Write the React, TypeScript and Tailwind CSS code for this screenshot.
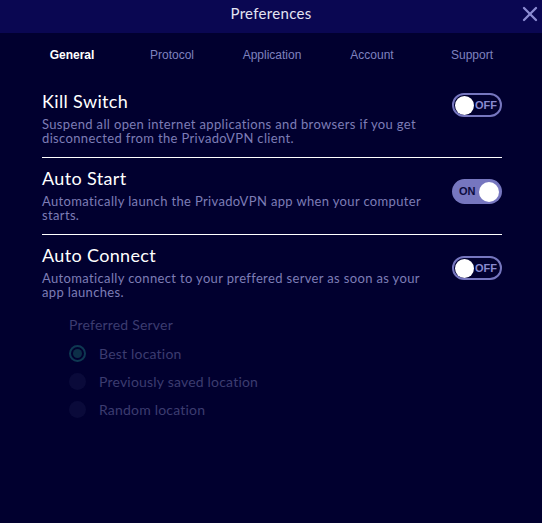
import { X } from "lucide-react";

const tabs = ["General", "Protocol", "Application", "Account", "Support"];

const Toggle = ({ on }: { on: boolean }) =>
  on ? (
    <div className="w-[50px] h-[25px] rounded-full bg-[#7676bf] flex items-center justify-between pl-[7px] pr-[3px]">
      <span className="text-[11px] font-bold text-[#0b0b3e] font-['Liberation_Sans',sans-serif]">ON</span>
      <span className="w-[20px] h-[20px] rounded-full bg-white" />
    </div>
  ) : (
    <div className="w-[50px] h-[24px] rounded-full border-2 border-[#7676bf] flex items-center justify-between pl-[1px] pr-[3px]">
      <span className="w-[19px] h-[19px] rounded-full bg-white" />
      <span className="text-[11px] font-bold text-[#8a8ad0] font-['Liberation_Sans',sans-serif]">OFF</span>
    </div>
  );

const Setting = ({
  title,
  desc,
  on,
  pt,
  toggleTop,
  divider,
}: {
  title: string;
  desc: string;
  on: boolean;
  pt: string;
  toggleTop: string;
  divider: boolean;
}) => (
  <div className={`${pt} pb-[12px] ${divider ? "border-b border-white" : ""} flex justify-between items-start`}>
    <div className="w-[392px]">
      <h2 className="text-[18px] leading-[22px] text-white tracking-[0.35px]">{title}</h2>
      <p className="mt-[5px] text-[13px] leading-[14px] text-[#7d7db6] tracking-[0.35px]">{desc}</p>
    </div>
    <div className={toggleTop}>
      <Toggle on={on} />
    </div>
  </div>
);

const Radio = ({ checked, label }: { checked: boolean; label: string }) => (
  <div className="flex items-center h-[28px]">
    {checked ? (
      <span className="w-[17px] h-[17px] rounded-full border-2 border-[#0e3852] flex items-center justify-center">
        <span className="w-[9px] h-[9px] rounded-full bg-[#0c2f48]" />
      </span>
    ) : (
      <span className="w-[17px] h-[17px] rounded-full bg-[#0a0a3a]" />
    )}
    <span className="ml-[13px] text-[14px] text-[#3c3c70] tracking-[0.2px]">{label}</span>
  </div>
);

export default function App() {
  return (
    <div className="w-[542px] h-[523px] bg-[#01002f] font-['Lato',sans-serif] overflow-hidden">
      <div className="relative h-[33px] bg-[#0a0752] flex justify-center pt-[3px]">
        <span className="text-[15px] leading-[20px] text-[#e4e4f2] tracking-[0.3px]">Preferences</span>
        <X className="absolute right-0 top-[2px] text-[#8c8cd2]" size={24} strokeWidth={2.3} />
      </div>

      <div className="h-[43px] pl-[22px] grid grid-cols-[100px_100px_100px_100px_100px] items-center font-['Liberation_Sans',sans-serif] text-[12px]">
        {tabs.map((t, i) => (
          <div key={t} className={`text-center ${i === 0 ? "text-white font-bold" : "text-[#7f82bf]"}`}>
            {t}
          </div>
        ))}
      </div>

      <div className="pl-[42px] pr-[40px]">
        <Setting
          title="Kill Switch"
          desc="Suspend all open internet applications and browsers if you get disconnected from the PrivadoVPN client."
          on={false}
          pt="pt-[14px]"
          toggleTop="mt-[3px]"
          divider
        />
        <Setting
          title="Auto Start"
          desc="Automatically launch the PrivadoVPN app when your computer starts."
          on={true}
          pt="pt-[9px]"
          toggleTop="mt-[12px]"
          divider
        />
        <Setting
          title="Auto Connect"
          desc="Automatically connect to your preffered server as soon as your app launches."
          on={false}
          pt="pt-[9px]"
          toggleTop="mt-[12px]"
          divider={false}
        />

        <div className="pl-[27px] pt-[5px]">
          <div className="text-[14px] text-[#3c3c70] h-[18px] leading-[18px] tracking-[0.2px]">Preferred Server</div>
          <div className="mt-[5px]">
            <Radio checked label="Best location" />
            <Radio checked={false} label="Previously saved location" />
            <Radio checked={false} label="Random location" />
          </div>
        </div>
      </div>
    </div>
  );
}
